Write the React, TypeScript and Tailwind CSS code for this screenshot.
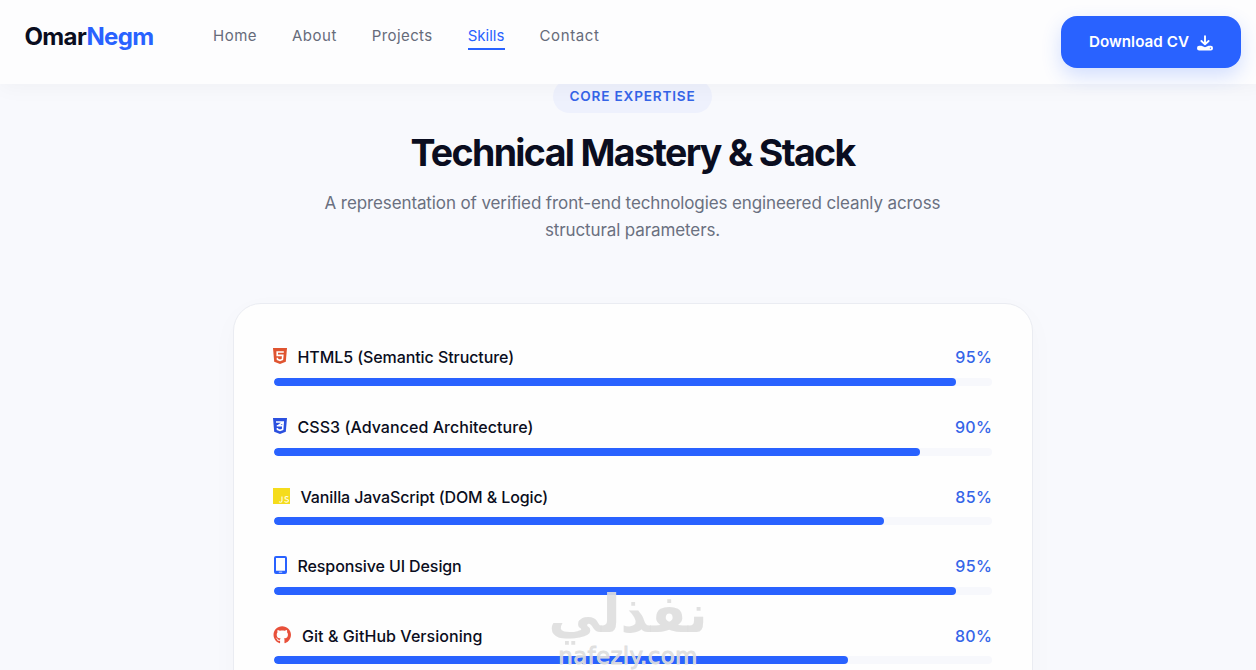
import type { ReactNode } from "react";
import { FaGithub } from "react-icons/fa6";

type Skill = { name: string; level: number; icon: ReactNode; tracking: string };

function ShieldIcon({ glyph, className }: { glyph: string; className: string }) {
  return (
    <svg viewBox="0 0 14 16" className={`-mt-px -ml-px h-4 w-3.5 shrink-0 ${className}`} fill="none">
      <path d="M0 0h14l-1.2 13.7L7 16l-5.8-2.3Z" fill="currentColor" />
      <path d={glyph} stroke="#fff" strokeWidth="1.6" />
    </svg>
  );
}

function JsIcon() {
  return (
    <svg viewBox="0 0 16 16" className="-mt-px -ml-px size-4 w-[17px] shrink-0" fill="none" preserveAspectRatio="none">
      <rect width="16" height="16" fill="#f5dc1c" />
      <path d="M8.4 8.5v4.2c0 1-.5 1.5-1.4 1.5-.6 0-1-.2-1.3-.6M14.3 9.2c-.8-1-3.1-.8-3.1.7 0 1.8 3.3.9 3.3 2.7 0 1.9-2.8 2-3.7.6" stroke="#fffbe0" strokeWidth="1.1" />
    </svg>
  );
}

function PhoneIcon() {
  return (
    <svg viewBox="0 0 13 18" className="-mt-px h-[18px] w-[13px] shrink-0 text-[#2962ff]" fill="none">
      <path fillRule="evenodd" clipRule="evenodd" d="M2 0h9a2 2 0 0 1 2 2v14a2 2 0 0 1-2 2H2a2 2 0 0 1-2-2V2a2 2 0 0 1 2-2Zm0 2v12.8h9V2Zm2.8 13.7v.9h3.4v-.9Z" fill="currentColor" />
    </svg>
  );
}

function DownloadIcon() {
  return (
    <svg viewBox="0 0 16 16" className="size-4 shrink-0" fill="none">
      <path d="M8 1.2v8M4.4 6 8 9.4 11.6 6" stroke="currentColor" strokeWidth="1.9" strokeLinecap="round" strokeLinejoin="round" />
      <path fillRule="evenodd" clipRule="evenodd" d="M2.2 10.7h2.2L8 12.2l3.6-1.5h2.2a2.2 2.2 0 0 1 2.2 2.2v.4a2.2 2.2 0 0 1-2.2 2.2H2.2A2.2 2.2 0 0 1 0 13.300v-.4a2.200 2.200 0 0 1 2.200-2.200Zm11.200 1.900a.6.6 0 1 0 0 1.200.6.6 0 0 0 0-1.200Z" fill="currentColor" />
    </svg>
  );
}

const skills: Skill[] = [
  { name: "HTML5 (Semantic Structure)", level: 95, icon: <ShieldIcon className="text-[#df5430]" glyph="M10.8 4H4.200v3.400h5.600l-.4 4L7 12.300l-2.500-.9-.1-1.600" />, tracking: "tracking-[-0.08px]" },
  { name: "CSS3 (Advanced Architecture)", level: 90, icon: <ShieldIcon className="text-[#2b50df]" glyph="M3 4h7.200l-.3 3.700H3.800M9.900 7.700l-.3 3.700-2.600.9-2.500-.9-.1-1.400M9.800 4.300 5.500 7.500" />, tracking: "tracking-[0.05px]" },
  { name: "Vanilla JavaScript (DOM & Logic)", level: 85, icon: <JsIcon />, tracking: "tracking-[-0.12px]" },
  { name: "Responsive UI Design", level: 95, icon: <PhoneIcon />, tracking: "tracking-[-0.1px]" },
  { name: "Git & GitHub Versioning", level: 80, icon: <FaGithub className="-mt-px -ml-px h-[18px] w-[18.5px] text-[#e8503a]" />, tracking: "tracking-[0.06px]" },
];

const links = [
  { label: "Home", style: "w-[44px] tracking-[0.5px]" },
  { label: "About", style: "w-[45px] tracking-[0.55px]" },
  { label: "Projects", style: "w-[61px] tracking-[0.4px]" },
  { label: "Skills", style: "w-[37px] border-b-2 border-[#2962ff] text-[#2962ff]" },
  { label: "Contact", style: "w-[60px] tracking-[0.6px]" },
];

function Header() {
  return (
    <header className="relative z-10 flex h-[84px] shrink-0 items-start bg-[#fdfdfe] pl-[24.5px] shadow-[0_4px_20px_rgba(0,0,0,0.035)]">
      <a className="mt-[20px] w-[188.5px] text-[24px] leading-[34px] font-bold tracking-[-0.65px] whitespace-nowrap text-[#0a0d20]">
        Omar<span className="text-[#2962ff]">Negm</span>
      </a>
      <nav className="mt-[23px] flex gap-[34.9px] text-[15px] leading-[25px] text-[#666b7a]">
        {links.map(({ label, style }) => (
          <a key={label} className={`${style} h-[27px] whitespace-nowrap`}>
            {label}
          </a>
        ))}
      </nav>
      <a className="mt-4 mr-6 ml-auto flex h-[52px] w-[180px] items-center justify-center gap-2 rounded-2xl bg-[#2962ff] pt-px text-[15.2px] font-semibold tracking-[0.05px] whitespace-nowrap text-white shadow-[0_8px_20px_rgba(41,98,255,0.2)]">
        Download CV
        <DownloadIcon />
      </a>
    </header>
  );
}

function SkillRow({ name, level, icon, tracking }: Skill) {
  return (
    <div className="h-[69.6px]">
      <div className="relative flex h-[27px] items-center text-base font-medium text-[#0a0d20]">
        <span className="shrink-0">{icon}</span>
        <span className={`ml-[11px] pt-px whitespace-nowrap ${tracking}`}>{name}</span>
        <span className="-mr-[0.6px] ml-auto pt-px tracking-[0.3px] text-[#3565e8]">{level}%</span>
      </div>
      <div className="mt-[7.5px] h-2 overflow-hidden rounded-full bg-[#f7f8fc]">
        <div className="h-full rounded-full bg-[#2962ff]" style={{ width: `${level}%` }} />
      </div>
    </div>
  );
}

export default function App() {
  return (
    <div className="relative h-[670px] w-full overflow-hidden bg-[#f8f9fd] font-['Inter',sans-serif]">
      <div className="flex h-[670px] w-[1265px] flex-col">
        <Header />
        <main className="flex flex-col items-center">
          <span className="-mt-1 flex h-[33px] w-[159px] items-center justify-center rounded-full bg-[#eef1fd] text-[13.6px] font-semibold tracking-[0.8px] whitespace-nowrap text-[#3565e8]">
            CORE EXPERTISE
          </span>
          <h2 className="mt-[16px] text-[37.5px] leading-[48px] font-bold tracking-[-1.65px] whitespace-nowrap text-[#0a0d20]">
            Technical Mastery &amp; Stack
          </h2>
          <p className="mt-[13px] text-center text-[17px] leading-[27.2px] tracking-[-0.11px] text-[#6a7080]">
            <span className="whitespace-nowrap">A representation of verified front-end technologies engineered cleanly across</span>
            <br />
            structural parameters.
          </p>
          <section className="mt-[58.5px] h-[440px] w-[800px] rounded-[28px] border border-[#eaecf2] bg-[#fefefe] px-10 pt-[39.5px] shadow-[0_8px_30px_rgba(20,30,70,0.025)]">
            {skills.map((skill) => (
              <SkillRow key={skill.name} {...skill} />
            ))}
          </section>
        </main>
      </div>
      <div className="pointer-events-none absolute top-[584px] left-[552px] flex w-[152px] flex-col items-center text-[#dedede]/90">
        <span lang="ar" dir="rtl" className="h-[60px] font-['DejaVu_Sans',sans-serif] text-[52px] leading-[60px] font-bold whitespace-nowrap">
          نفذلي
        </span>
        <span className="font-['DejaVu_Sans',sans-serif] text-[23px] leading-6 tracking-[0.3px] whitespace-nowrap [-webkit-text-stroke:0.8px_#dedede]">nafezly.com</span>
      </div>
    </div>
  );
}
